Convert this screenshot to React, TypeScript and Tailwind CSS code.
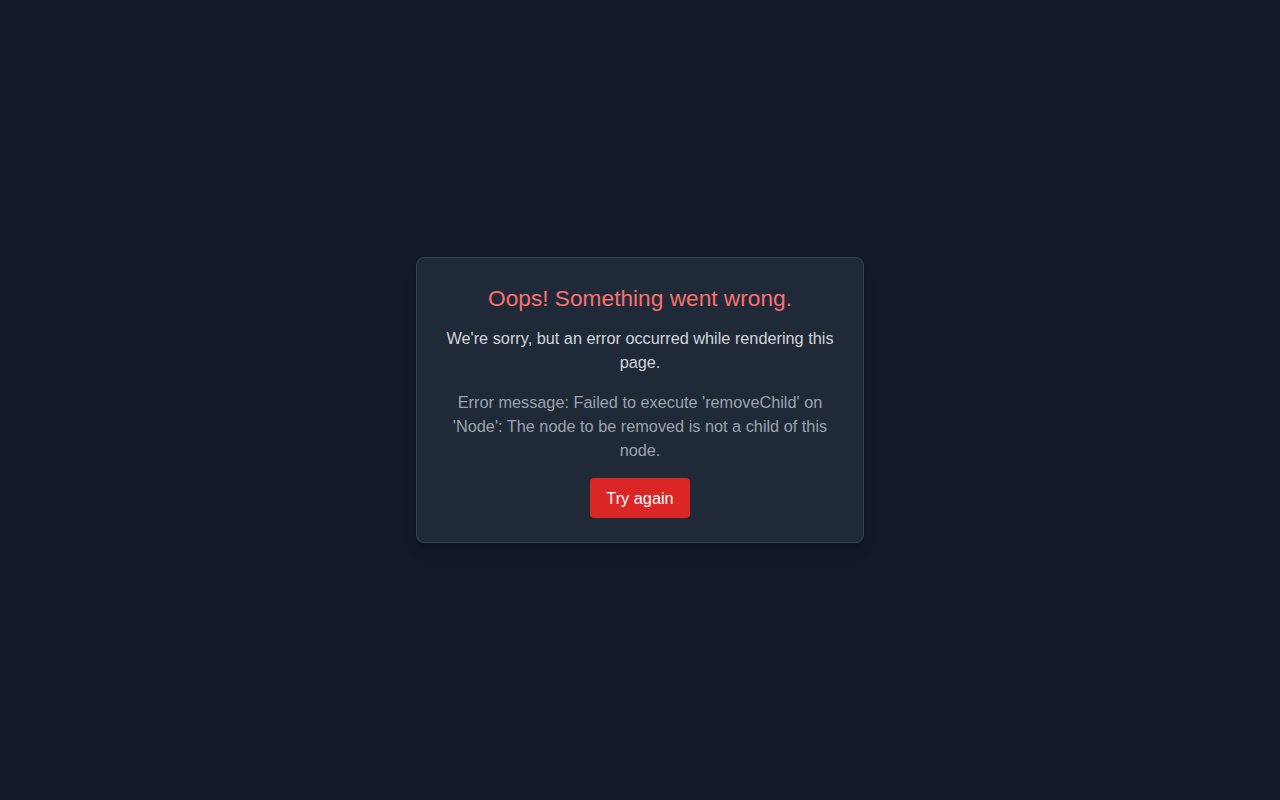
export default function App() {
  return (
    <div
      className="min-h-screen w-full bg-[#111827] flex items-center justify-center"
      style={{ fontFamily: '"Liberation Sans", Arial, sans-serif' }}
    >
      <div className="w-full max-w-md bg-[#1f2937] border border-[#374151] rounded-lg shadow-lg p-6 text-center">
        <h1 className="text-[22.7px] leading-[32px] text-[#f87171] mb-3">Oops! Something went wrong.</h1>
        <p className="text-[16.3px] leading-6 text-[#d1d5db] mb-4">
          We're sorry, but an error occurred while rendering this page.
        </p>
        <p className="text-[16.3px] leading-6 text-[#9ca3af] mb-4">
          Error message: Failed to execute 'removeChild' on 'Node': The node to be removed is not a child of this node.
        </p>
        <button className="bg-[#dc2626] text-white px-4 py-2 rounded text-[16.3px] leading-6">Try again</button>
      </div>
    </div>
  );
}
